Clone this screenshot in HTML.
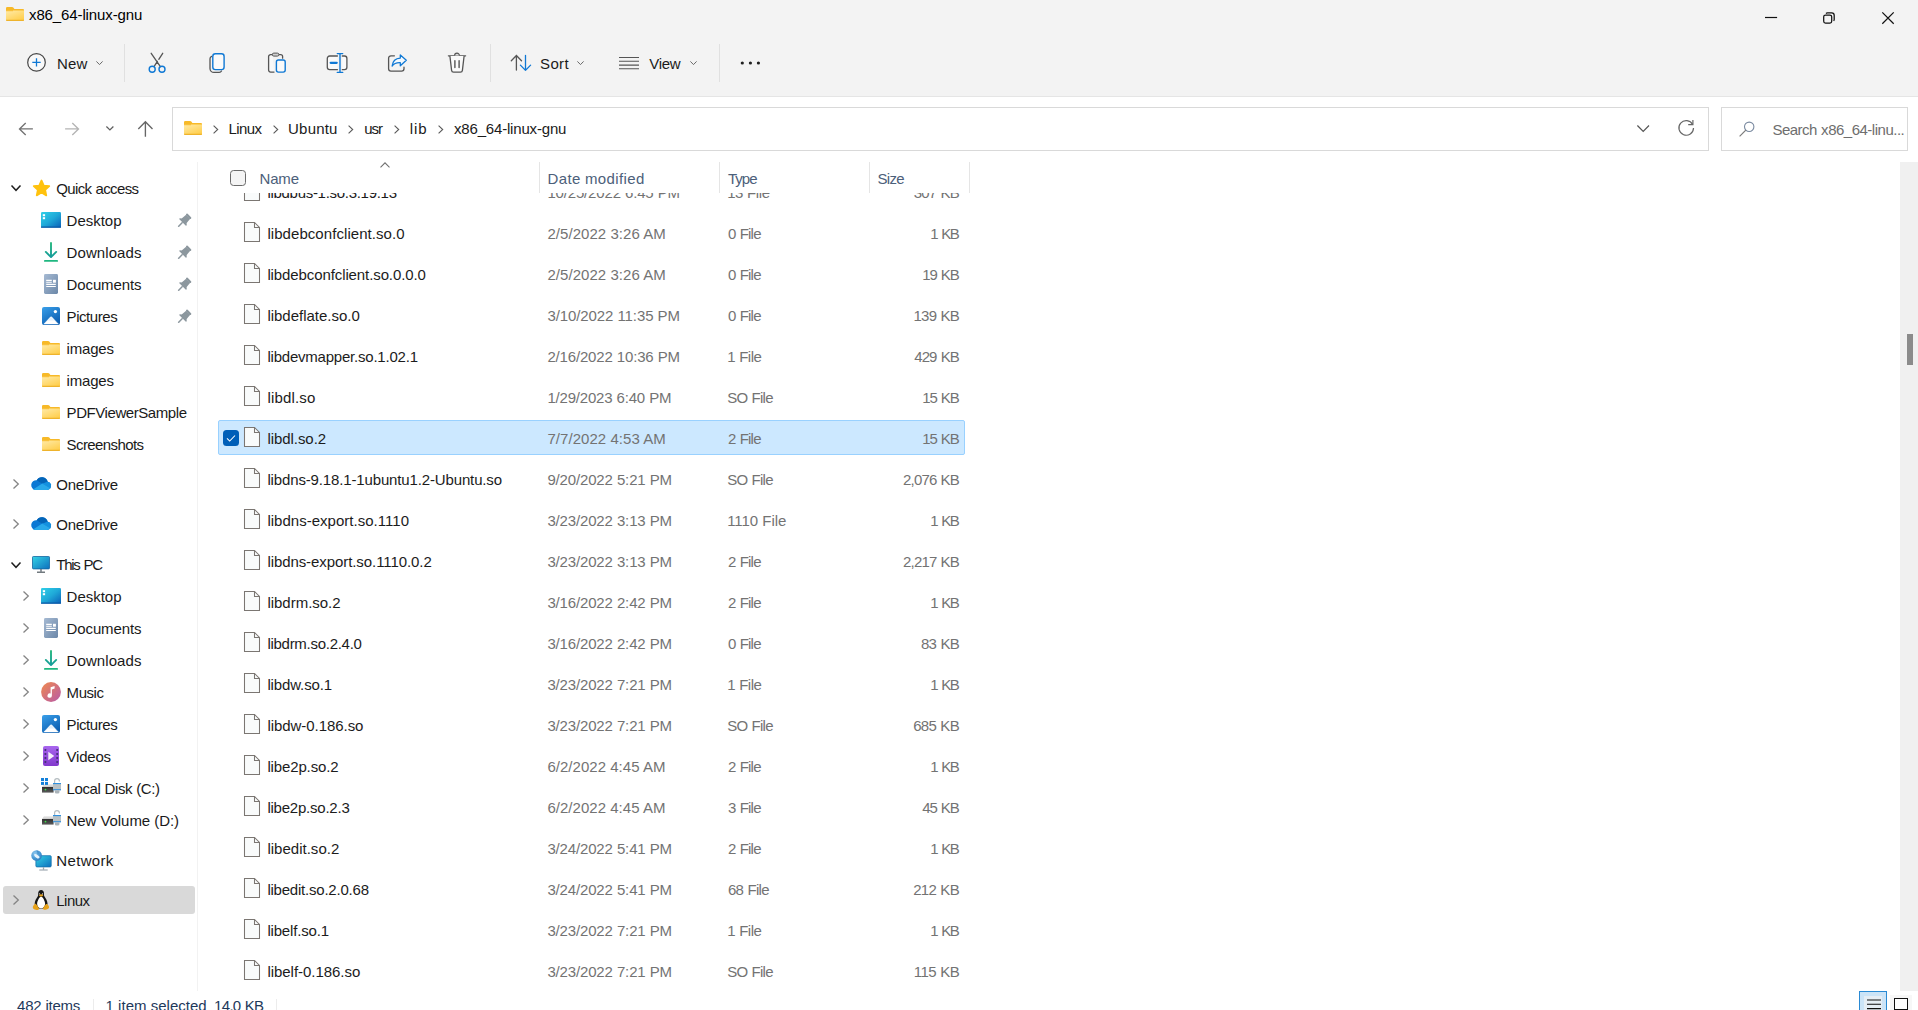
<!DOCTYPE html>
<html lang="en">
<head>
<meta charset="utf-8">
<title>x86_64-linux-gnu</title>
<style>
html,body{margin:0;padding:0}
html{width:1918px;height:1010px;overflow:hidden}
body{width:1918px;height:1010px;overflow:hidden;background:#fff;position:relative;font-family:"Liberation Sans",sans-serif}
.t{position:absolute;line-height:1;white-space:pre}
.a{position:absolute}
svg{position:absolute;overflow:visible}
#top{left:0;top:0;width:1918px;height:96px;background:#f3f3f3}
#topline{left:0;top:96px;width:1918px;height:1px;background:#e5e5e5}
.vsep{width:1px;background:#e0e0e0}
.box{box-sizing:border-box;border:1px solid #d9d9d9;background:#fff}
#win{position:absolute;left:0;top:0;width:1918px;height:1010px;overflow:hidden;background:#fff}

</style>
</head>
<body>
<div id="win">
<div class="a" id="top">
</div>
<div class="a" id="topline">
</div>
<span class="t" style="top:7.10px;font-size:15px;color:#000;left:29.00px;letter-spacing:-0.115px;">x86_64-linux-gnu</span>
<div class="a vsep" style="left:124px;top:44px;height:38px">
</div>
<div class="a vsep" style="left:490px;top:44px;height:38px">
</div>
<div class="a vsep" style="left:719px;top:44px;height:38px">
</div>
<span class="t" style="top:56.10px;font-size:15px;color:#1b1b1b;left:56.96px;letter-spacing:0.182px;">New</span>
<span class="t" style="top:56.10px;font-size:15px;color:#1b1b1b;left:540.08px;letter-spacing:0.345px;">Sort</span>
<span class="t" style="top:56.10px;font-size:15px;color:#1b1b1b;left:649.20px;letter-spacing:-0.260px;">View</span>
<div class="a box" style="left:172px;top:107px;width:1537px;height:44px">
</div>
<div class="a box" style="left:1721px;top:107px;width:187px;height:44px">
</div>
<span class="t" style="top:121.00px;font-size:15px;color:#1b1b1b;left:228.40px;letter-spacing:-0.590px;">Linux</span>
<span class="t" style="top:121.00px;font-size:15px;color:#1b1b1b;left:288.08px;letter-spacing:0.197px;">Ubuntu</span>
<span class="t" style="top:121.00px;font-size:15px;color:#1b1b1b;left:364.30px;letter-spacing:-1.122px;">usr</span>
<span class="t" style="top:121.00px;font-size:15px;color:#1b1b1b;left:409.64px;letter-spacing:0.927px;">lib</span>
<span class="t" style="top:121.00px;font-size:15px;color:#1b1b1b;left:454.00px;letter-spacing:-0.179px;">x86_64-linux-gnu</span>
<span class="t" style="top:121.80px;font-size:15px;color:#6e6e6e;left:1772.40px;letter-spacing:-0.494px;word-spacing:0.494px;">Search x86_64-linu...</span>
<svg width="0" height="0" style="left:0;top:0">
<defs>
<linearGradient id="gFold" x1="0.200" y1="0" x2="0.800" y2="1">
<stop offset="0" stop-color="#ffe8a0"/>
<stop offset="1" stop-color="#ffcd48"/>
</linearGradient>
<linearGradient id="gDesk" x1="0" y1="0" x2="1" y2="1">
<stop offset="0" stop-color="#30d0e8"/>
<stop offset="0.500" stop-color="#1fa9d8"/>
<stop offset="1" stop-color="#0b60b8"/>
</linearGradient>
<linearGradient id="gDoc" x1="0" y1="0" x2="1" y2="1">
<stop offset="0" stop-color="#a6bad3"/>
<stop offset="1" stop-color="#6b87a8"/>
</linearGradient>
<linearGradient id="gPic" x1="0" y1="0" x2="0.6" y2="1">
<stop offset="0" stop-color="#3aa0ea"/>
<stop offset="1" stop-color="#0c5fb2"/>
</linearGradient>
<linearGradient id="gDown" x1="0" y1="0" x2="0" y2="16" gradientUnits="userSpaceOnUse">
<stop offset="0" stop-color="#27b97c"/>
<stop offset="1" stop-color="#149a9c"/>
</linearGradient>
<linearGradient id="gMus" x1="0" y1="0" x2="1" y2="1">
<stop offset="0" stop-color="#f08a4e"/>
<stop offset="1" stop-color="#b75aa8"/>
</linearGradient>
<linearGradient id="gVid" x1="0" y1="0" x2="0" y2="1">
<stop offset="0" stop-color="#a866ee"/>
<stop offset="1" stop-color="#8238cc"/>
</linearGradient>
<linearGradient id="gMon" x1="0" y1="0" x2="1" y2="1">
<stop offset="0" stop-color="#35d3e6"/>
<stop offset="1" stop-color="#0d6fbd"/>
</linearGradient>
<linearGradient id="gDrv" x1="0" y1="0" x2="0" y2="1">
<stop offset="0" stop-color="#2e2e2e"/>
<stop offset="1" stop-color="#5c5c5c"/>
</linearGradient>
<linearGradient id="gDrvT" x1="0" y1="0" x2="0" y2="1">
<stop offset="0" stop-color="#f0f0f0"/>
<stop offset="1" stop-color="#c9c9c9"/>
</linearGradient>
<radialGradient id="gGlobe" cx="0.350" cy="0.300" r="0.800">
<stop offset="0" stop-color="#8fc8ee"/>
<stop offset="0.600" stop-color="#4596d4"/>
<stop offset="1" stop-color="#2a78ba"/>
</radialGradient>
</defs>
</svg>
<svg style="left:6px;top:7px" width="18" height="14" viewBox="0 0 18 14">
<path d="M0 1.2A1.2 1.2 0 0 1 1.2 0h4.9c.5 0 .9.2 1.2.6L8.4 2H17a1 1 0 0 1 1 1v2H0z" fill="#f7b928"/>
<path d="M0 3.400h18V13a1 1 0 0 1-1 1H1a1 1 0 0 1-1-1z" fill="url(#gFold)"/>
<rect x="0" y="3.300" width="7" height="0.900" fill="#f7b928"/>
<path d="M0 12.8h18V13a1 1 0 0 1-1 1H1a1 1 0 0 1-1-1z" fill="#eeb32c"/>
</svg>
<svg style="left:1765px;top:12px" width="130" height="13" viewBox="0 0 130 13">
<path d="M0 5.500h12.100" stroke="#111" stroke-width="1.200"/>
<rect x="58.700" y="3" width="8" height="8" rx="1.800" fill="none" stroke="#111" stroke-width="1.250"/>
<path d="M61 1.500a2 2 0 0 1 1.600-.600h4.100a2.500 2.500 0 0 1 2.500 2.500v4.100a2 2 0 0 1-.600 1.400" fill="none" stroke="#111" stroke-width="1.250"/>
<path d="M117.300 0.400l11.400 11.400M128.700 0.400L117.300 11.800" stroke="#111" stroke-width="1.250"/>
</svg>
<svg style="left:27px;top:53px" width="19" height="19" viewBox="0 0 19 19">
<circle cx="9.500" cy="9.400" r="8.800" fill="#f9f9f9" stroke="#454545" stroke-width="1.200"/>
<path d="M9.500 5.200v8.400M5.300 9.400h8.400" stroke="#0f78d4" stroke-width="1.300"/>
</svg>
<svg style="left:95.7px;top:61.3px" width="7" height="4.5" viewBox="0 0 7 4.5">
<path d="M0.400 0.400L3.500 3.600 6.600 .4" fill="none" stroke="#6a6a6a" stroke-width="1"/>
</svg>
<svg style="left:576.6px;top:61.3px" width="7" height="4.5" viewBox="0 0 7 4.5">
<path d="M0.400 0.400L3.500 3.600 6.600 .4" fill="none" stroke="#6a6a6a" stroke-width="1"/>
</svg>
<svg style="left:689.6px;top:61.3px" width="7" height="4.5" viewBox="0 0 7 4.5">
<path d="M0.400 0.400L3.500 3.600 6.600 .4" fill="none" stroke="#6a6a6a" stroke-width="1"/>
</svg>
<svg style="left:148px;top:52px" width="19" height="22" viewBox="0 0 19 22">
<path d="M3.200 1.300l9.200 13.400M14.700 1.300l-3.900 6M9.400 9.400l-3.400 5.200" stroke="#555" stroke-width="1.300" stroke-linecap="round" fill="none"/>
<circle cx="4.200" cy="17.300" r="3" fill="none" stroke="#0f78d4" stroke-width="1.400"/>
<circle cx="14" cy="17.300" r="3" fill="none" stroke="#0f78d4" stroke-width="1.400"/>
</svg>
<svg style="left:208px;top:52px" width="18" height="22" viewBox="0 0 18 22">
<path d="M3.600 4.300A2.600 2.600 0 0 0 2 6.700v9.700a4 4 0 0 0 4 4h5.200a2.600 2.600 0 0 0 2.300-1.400" fill="none" stroke="#555" stroke-width="1.300" stroke-linecap="round"/>
<rect x="4.800" y="1.800" width="11.300" height="15.800" rx="2.600" fill="#fafafa" stroke="#0f78d4" stroke-width="1.400"/>
</svg>
<svg style="left:267px;top:52px" width="20" height="22" viewBox="0 0 20 22">
<path d="M7 20.100H3.600a2 2 0 0 1-2-2V4.600a2 2 0 0 1 2-2h2M11.600 2.600h2a2 2 0 0 1 2 2v1.600" fill="#f9f9f9" stroke="#555" stroke-width="1.300" stroke-linecap="round"/>
<rect x="5.300" y="1.100" width="6.600" height="3" rx="1.500" fill="#cfcfcf" stroke="#555" stroke-width="1"/>
<rect x="9.400" y="8" width="8.800" height="12.100" rx="2" fill="#fafafa" stroke="#0f78d4" stroke-width="1.400"/>
</svg>
<svg style="left:326px;top:52px" width="22" height="22" viewBox="0 0 22 22">
<path d="M11.400 4h-7.700a2.400 2.400 0 0 0-2.400 2.400v8.900a2.400 2.400 0 0 0 2.400 2.400h7.700M16.300 4h2.200a2.400 2.400 0 0 1 2.400 2.400v8.900a2.400 2.400 0 0 1-2.400 2.400h-2.200" fill="#fafafa" stroke="#555" stroke-width="1.300" stroke-linecap="round"/>
<path d="M4.700 10.800h6" stroke="#0f78d4" stroke-width="2.300" stroke-linecap="round"/>
<path d="M14 1.700v18.600M11.300 1.600h5.400M11.300 20.400h5.400" stroke="#0f78d4" stroke-width="1.400" stroke-linecap="round"/>
</svg>
<svg style="left:387px;top:53px" width="21" height="20" viewBox="0 0 21 20">
<path d="M7.400 2.800H4a2.400 2.400 0 0 0-2.400 2.400v10.600A2.400 2.400 0 0 0 4 18.200h10.600a2.400 2.400 0 0 0 2.400-2.400v-1.600" fill="none" stroke="#555" stroke-width="1.300" stroke-linecap="round"/>
<path d="M13.300 2l6 5.300-6 5.500v-3.100c-4-.2-6.500 1-8.200 3.300.5-4.400 3.200-7.600 8.200-7.900z" fill="#f3f9fe" stroke="#0f78d4" stroke-width="1.300" stroke-linejoin="round"/>
</svg>
<svg style="left:447px;top:52px" width="20" height="22" viewBox="0 0 20 22">
<path d="M1.400 3.800h17.200" stroke="#555" stroke-width="1.300" stroke-linecap="round"/>
<path d="M7.600 3.600a2.400 2.400 0 0 1 4.800 0" fill="#ddd" stroke="#555" stroke-width="1.200"/>
<path d="M2.900 4l1.700 14.400a2 2 0 0 0 2 1.800h6.800a2 2 0 0 0 2-1.800L17.100 4" fill="#fafafa" stroke="#555" stroke-width="1.300"/>
<path d="M7.900 8.800v6.800M12.100 8.800v6.800" stroke="#555" stroke-width="1.400" stroke-linecap="round"/>
</svg>
<svg style="left:510px;top:54px" width="22" height="18" viewBox="0 0 22 18">
<path d="M6.400 16.100V1.500M1.300 6.800L6.400 1.500l5.100 5.300" fill="none" stroke="#555" stroke-width="1.300" stroke-linecap="round" stroke-linejoin="round"/>
<path d="M15.500 1.300v15M10.400 11.100l5.100 5.300 5.100-5.300" fill="none" stroke="#0f78d4" stroke-width="1.300" stroke-linecap="round" stroke-linejoin="round"/>
</svg>
<svg style="left:619px;top:56px" width="20" height="14" viewBox="0 0 20 14">
<path d="M0 1.500h20M0 5.300h20M0 9.100h20M0 12.800h20" stroke="#555" stroke-width="1.100"/>
</svg>
<svg style="left:740px;top:61px" width="22" height="4" viewBox="0 0 22 4">
<circle cx="2.300" cy="2" r="1.600" fill="#1f1f1f"/>
<circle cx="10.400" cy="2" r="1.600" fill="#1f1f1f"/>
<circle cx="18.400" cy="2" r="1.600" fill="#1f1f1f"/>
</svg>
<svg style="left:18px;top:121px" width="16" height="16" viewBox="0 0 16 16">
<path d="M14.900 7.900H1.600M7.700 1.900L1.500 7.900l6.200 6" fill="none" stroke="#727272" stroke-width="1.350"/>
</svg>
<svg style="left:65px;top:121px" width="16" height="16" viewBox="0 0 16 16">
<path d="M0.100 7.900h13.400M7.300 1.900l6.200 6-6.200 6" fill="none" stroke="#b4b4b4" stroke-width="1.350"/>
</svg>
<svg style="left:105.5px;top:126.1px" width="8" height="5.5" viewBox="0 0 8 5.5">
<path d="M0.400 0.500L3.900 3.900 7.400.5" fill="none" stroke="#5f5f5f" stroke-width="1.250"/>
</svg>
<svg style="left:138px;top:121px" width="16" height="16" viewBox="0 0 16 16">
<path d="M7.400 15.800V1M0.300 7.900L7.400.8l7.100 7.100" fill="none" stroke="#666" stroke-width="1.350"/>
</svg>
<svg style="left:184px;top:121px" width="18" height="14" viewBox="0 0 18 14">
<path d="M0 1.2A1.2 1.2 0 0 1 1.2 0h4.9c.5 0 .9.2 1.2.6L8.4 2H17a1 1 0 0 1 1 1v2H0z" fill="#f7b928"/>
<path d="M0 3.400h18V13a1 1 0 0 1-1 1H1a1 1 0 0 1-1-1z" fill="url(#gFold)"/>
<rect x="0" y="3.300" width="7" height="0.900" fill="#f7b928"/>
<path d="M0 12.8h18V13a1 1 0 0 1-1 1H1a1 1 0 0 1-1-1z" fill="#eeb32c"/>
</svg>
<svg style="left:212.5px;top:124.6px" width="6" height="9" viewBox="0 0 6 9">
<path d="M0.600 0.600L4.700 4.500.6 8.400" fill="none" stroke="#5a5a5a" stroke-width="1.100"/>
</svg>
<svg style="left:273.2px;top:124.6px" width="6" height="9" viewBox="0 0 6 9">
<path d="M0.600 0.600L4.700 4.500.6 8.400" fill="none" stroke="#5a5a5a" stroke-width="1.100"/>
</svg>
<svg style="left:348.3px;top:124.6px" width="6" height="9" viewBox="0 0 6 9">
<path d="M0.600 0.600L4.700 4.500.6 8.400" fill="none" stroke="#5a5a5a" stroke-width="1.100"/>
</svg>
<svg style="left:393.6px;top:124.6px" width="6" height="9" viewBox="0 0 6 9">
<path d="M0.600 0.600L4.700 4.500.6 8.400" fill="none" stroke="#5a5a5a" stroke-width="1.100"/>
</svg>
<svg style="left:438px;top:124.6px" width="6" height="9" viewBox="0 0 6 9">
<path d="M0.600 0.600L4.700 4.500.6 8.400" fill="none" stroke="#5a5a5a" stroke-width="1.100"/>
</svg>
<svg style="left:1637px;top:124.5px" width="13" height="8" viewBox="0 0 13 8">
<path d="M0.400 0.500l5.800 6 5.800-6" fill="none" stroke="#555" stroke-width="1.200"/>
</svg>
<svg style="left:1677px;top:119px" width="18" height="18" viewBox="0 0 18 18">
<path d="M15.600 5.400A7.300 7.300 0 1 0 16.500 9" fill="none" stroke="#666" stroke-width="1.200"/>
<path d="M15.900 1v4.700h-4.700" fill="none" stroke="#666" stroke-width="1.200"/>
</svg>
<svg style="left:1739px;top:120.5px" width="16" height="16" viewBox="0 0 16 16">
<circle cx="10.200" cy="5.800" r="4.700" fill="none" stroke="#7a8aa0" stroke-width="1.100"/>
<path d="M6.800 9.200L0.600 15.400" stroke="#7a7a7a" stroke-width="1.200"/>
</svg>
<div class="a" style="left:197px;top:162px;width:1px;height:829px;background:#f2f2f2">
</div>
<div class="a" style="left:3px;top:886px;width:192px;height:28px;background:#d9d9d9;border-radius:3px">
</div>
<span class="t" style="top:181.10px;font-size:15px;color:#1a1a1a;left:56.30px;letter-spacing:-0.650px;word-spacing:0.650px;">Quick access</span>
<span class="t" style="top:213.10px;font-size:15px;color:#1a1a1a;left:66.60px;letter-spacing:-0.019px;">Desktop</span>
<span class="t" style="top:245.10px;font-size:15px;color:#1a1a1a;left:66.60px;letter-spacing:0.081px;">Downloads</span>
<span class="t" style="top:277.10px;font-size:15px;color:#1a1a1a;left:66.60px;letter-spacing:-0.126px;">Documents</span>
<span class="t" style="top:309.10px;font-size:15px;color:#1a1a1a;left:66.60px;letter-spacing:-0.450px;">Pictures</span>
<span class="t" style="top:341.10px;font-size:15px;color:#1a1a1a;left:66.60px;letter-spacing:-0.192px;">images</span>
<span class="t" style="top:373.10px;font-size:15px;color:#1a1a1a;left:66.60px;letter-spacing:-0.192px;">images</span>
<span class="t" style="top:405.10px;font-size:15px;color:#1a1a1a;left:66.60px;letter-spacing:-0.432px;">PDFViewerSample</span>
<span class="t" style="top:437.10px;font-size:15px;color:#1a1a1a;left:66.60px;letter-spacing:-0.599px;">Screenshots</span>
<span class="t" style="top:477.10px;font-size:15px;color:#1a1a1a;left:56.30px;letter-spacing:-0.237px;">OneDrive</span>
<span class="t" style="top:517.10px;font-size:15px;color:#1a1a1a;left:56.30px;letter-spacing:-0.237px;">OneDrive</span>
<span class="t" style="top:557.10px;font-size:15px;color:#1a1a1a;left:56.30px;letter-spacing:-1.329px;word-spacing:1.329px;">This PC</span>
<span class="t" style="top:589.10px;font-size:15px;color:#1a1a1a;left:66.60px;letter-spacing:-0.019px;">Desktop</span>
<span class="t" style="top:621.10px;font-size:15px;color:#1a1a1a;left:66.60px;letter-spacing:-0.126px;">Documents</span>
<span class="t" style="top:653.10px;font-size:15px;color:#1a1a1a;left:66.60px;letter-spacing:0.081px;">Downloads</span>
<span class="t" style="top:685.10px;font-size:15px;color:#1a1a1a;left:66.60px;letter-spacing:-0.443px;">Music</span>
<span class="t" style="top:717.10px;font-size:15px;color:#1a1a1a;left:66.60px;letter-spacing:-0.450px;">Pictures</span>
<span class="t" style="top:749.10px;font-size:15px;color:#1a1a1a;left:66.60px;letter-spacing:-0.239px;">Videos</span>
<span class="t" style="top:781.10px;font-size:15px;color:#1a1a1a;left:66.60px;letter-spacing:-0.415px;word-spacing:0.415px;">Local Disk (C:)</span>
<span class="t" style="top:813.10px;font-size:15px;color:#1a1a1a;left:66.60px;letter-spacing:-0.083px;word-spacing:0.083px;">New Volume (D:)</span>
<span class="t" style="top:853.10px;font-size:15px;color:#1a1a1a;left:56.30px;letter-spacing:0.337px;">Network</span>
<span class="t" style="top:893.10px;font-size:15px;color:#1a1a1a;left:56.30px;letter-spacing:-0.540px;">Linux</span>
<svg style="left:10.8px;top:185.4px" width="10" height="5.8" viewBox="0 0 10 5.8">
<path d="M0.500 0.500L5 5.3L9.5 0.500" fill="none" stroke="#1f1f1f" stroke-width="1.5"/>
</svg>
<svg style="left:31.6px;top:179px" width="19" height="18" viewBox="0 0 19 18">
<path d="M9.500 1.400l2.300 5.100 5.500.600-4.100 3.800 1.100 5.500-4.800-2.800-4.800 2.800 1.100-5.500L1.700 7.100l5.500-.600z" fill="#ffc20e" stroke="#ffc20e" stroke-width="1.700" stroke-linejoin="round"/>
</svg>
<svg style="left:41px;top:212px" width="20" height="16" viewBox="0 0 20 16">
<rect x="0" y="0" width="20" height="15.6" rx="1.2" fill="url(#gDesk)"/>
<rect x="0" y="14.6" width="20" height="1.2" rx="0.5" fill="#0a58a6"/>
<rect x="1.800" y="2.200" width="2.300" height="2" fill="#fff"/>
<rect x="1.800" y="5.200" width="2.300" height="2" fill="#fff"/>
</svg>
<svg style="left:44px;top:242px" width="14" height="20" viewBox="0 0 14 20">
<path d="M7 0.900v14M1.800 9.900L7 15.100l5.200-5.200" fill="none" stroke="url(#gDown)" stroke-width="1.900" stroke-linecap="round" stroke-linejoin="round"/>
<path d="M0.900 18.900h12.200" stroke="#1fb780" stroke-width="1.900" stroke-linecap="round"/>
</svg>
<svg style="left:44px;top:274.2px" width="14" height="20" viewBox="0 0 14 20">
<rect x="0" y="0" width="14" height="20" rx="1.400" fill="url(#gDoc)"/>
<path d="M2.200 6.300h5.600M2.200 8.200h5.600M2.200 10.400h9.600M2.200 12.500h9.600" stroke="#fff" stroke-width="1.150"/>
<rect x="9" y="5.800" width="2.900" height="2.900" fill="#fff"/>
</svg>
<svg style="left:42px;top:307px" width="18" height="18" viewBox="0 0 18 18">
<rect x="0" y="0" width="18" height="18" rx="2" fill="url(#gPic)"/>
<path d="M2 16.900L8.500 10c.300-.400.900-.400 1.200 0L16.200 16.900z" fill="#fff" stroke="#fff" stroke-width="0.600" stroke-linejoin="round"/>
<path d="M5.800 13.500L8.500 10.500c.300-.300.900-.300 1.200 0l2.700 3z" fill="#e3f0fc"/>
<circle cx="13.400" cy="4.600" r="1.650" fill="#fff"/>
</svg>
<svg style="left:176px;top:212px" width="16" height="16" viewBox="0 0 16 16">
<g transform="translate(6.500 10.400) rotate(45)" fill="#8c979e">
<rect x="-3.300" y="-9.700" width="6.600" height="2" rx="0.900"/>
<path d="M-2.900-8h5.800l.500 5.800h-6.800z"/>
<path d="M-5.100 0c.200-1.500 1.300-2.500 2.700-2.700h4.800c1.400.200 2.500 1.200 2.700 2.700z"/>
<rect x="-0.750" y="-0.200" width="1.500" height="6.300" rx="0.400"/>
</g>
</svg>
<svg style="left:176px;top:244px" width="16" height="16" viewBox="0 0 16 16">
<g transform="translate(6.500 10.400) rotate(45)" fill="#8c979e">
<rect x="-3.300" y="-9.700" width="6.600" height="2" rx="0.900"/>
<path d="M-2.900-8h5.800l.500 5.800h-6.800z"/>
<path d="M-5.100 0c.200-1.500 1.300-2.500 2.700-2.700h4.800c1.400.200 2.500 1.200 2.700 2.700z"/>
<rect x="-0.750" y="-0.200" width="1.500" height="6.300" rx="0.400"/>
</g>
</svg>
<svg style="left:176px;top:276px" width="16" height="16" viewBox="0 0 16 16">
<g transform="translate(6.500 10.400) rotate(45)" fill="#8c979e">
<rect x="-3.300" y="-9.700" width="6.600" height="2" rx="0.900"/>
<path d="M-2.900-8h5.800l.500 5.800h-6.800z"/>
<path d="M-5.100 0c.200-1.500 1.300-2.500 2.700-2.700h4.800c1.400.200 2.500 1.200 2.700 2.700z"/>
<rect x="-0.750" y="-0.200" width="1.500" height="6.300" rx="0.400"/>
</g>
</svg>
<svg style="left:176px;top:308px" width="16" height="16" viewBox="0 0 16 16">
<g transform="translate(6.500 10.400) rotate(45)" fill="#8c979e">
<rect x="-3.300" y="-9.700" width="6.600" height="2" rx="0.900"/>
<path d="M-2.900-8h5.800l.500 5.800h-6.800z"/>
<path d="M-5.100 0c.200-1.500 1.300-2.500 2.700-2.700h4.800c1.400.200 2.500 1.200 2.700 2.700z"/>
<rect x="-0.750" y="-0.200" width="1.500" height="6.300" rx="0.400"/>
</g>
</svg>
<svg style="left:42px;top:341px" width="18" height="14" viewBox="0 0 18 14">
<path d="M0 1.2A1.2 1.2 0 0 1 1.2 0h4.9c.5 0 .9.2 1.2.6L8.4 2H17a1 1 0 0 1 1 1v2H0z" fill="#f7b928"/>
<path d="M0 3.400h18V13a1 1 0 0 1-1 1H1a1 1 0 0 1-1-1z" fill="url(#gFold)"/>
<rect x="0" y="3.300" width="7" height="0.900" fill="#f7b928"/>
<path d="M0 12.8h18V13a1 1 0 0 1-1 1H1a1 1 0 0 1-1-1z" fill="#eeb32c"/>
</svg>
<svg style="left:42px;top:373px" width="18" height="14" viewBox="0 0 18 14">
<path d="M0 1.2A1.2 1.2 0 0 1 1.2 0h4.9c.5 0 .9.2 1.2.6L8.4 2H17a1 1 0 0 1 1 1v2H0z" fill="#f7b928"/>
<path d="M0 3.400h18V13a1 1 0 0 1-1 1H1a1 1 0 0 1-1-1z" fill="url(#gFold)"/>
<rect x="0" y="3.300" width="7" height="0.900" fill="#f7b928"/>
<path d="M0 12.8h18V13a1 1 0 0 1-1 1H1a1 1 0 0 1-1-1z" fill="#eeb32c"/>
</svg>
<svg style="left:42px;top:405px" width="18" height="14" viewBox="0 0 18 14">
<path d="M0 1.2A1.2 1.2 0 0 1 1.2 0h4.9c.5 0 .9.2 1.2.6L8.4 2H17a1 1 0 0 1 1 1v2H0z" fill="#f7b928"/>
<path d="M0 3.400h18V13a1 1 0 0 1-1 1H1a1 1 0 0 1-1-1z" fill="url(#gFold)"/>
<rect x="0" y="3.300" width="7" height="0.900" fill="#f7b928"/>
<path d="M0 12.8h18V13a1 1 0 0 1-1 1H1a1 1 0 0 1-1-1z" fill="#eeb32c"/>
</svg>
<svg style="left:42px;top:437px" width="18" height="14" viewBox="0 0 18 14">
<path d="M0 1.2A1.2 1.2 0 0 1 1.2 0h4.9c.5 0 .9.2 1.2.6L8.4 2H17a1 1 0 0 1 1 1v2H0z" fill="#f7b928"/>
<path d="M0 3.400h18V13a1 1 0 0 1-1 1H1a1 1 0 0 1-1-1z" fill="url(#gFold)"/>
<rect x="0" y="3.300" width="7" height="0.900" fill="#f7b928"/>
<path d="M0 12.8h18V13a1 1 0 0 1-1 1H1a1 1 0 0 1-1-1z" fill="#eeb32c"/>
</svg>
<svg style="left:13.3px;top:479.2px" width="6" height="10" viewBox="0 0 6 10">
<path d="M0.500 0.500L5.300 5 .5 9.500" fill="none" stroke="#858585" stroke-width="1.3"/>
</svg>
<svg style="left:31px;top:477px" width="20" height="13" viewBox="0 0 20 13">
<path d="M4.600 13h11.200a4.200 4.200 0 0 0 .900-8.300A6 6 0 0 0 5.700 3.200 4.900 4.900 0 0 0 4.600 13z" fill="#0a78d4"/>
<path d="M5.700 3.200A6 6 0 0 1 16.700 4.700L11.200 6.700z" fill="#0364b8"/>
<path d="M16.700 4.700a4.200 4.200 0 0 1 2.600 6.600L11.200 6.700z" fill="#1490df"/>
<path d="M11.200 6.500l8.100 4.800a4.200 4.200 0 0 1-3.500 1.700H4.600a4.900 4.900 0 0 1-2.500-.600z" fill="#28a8ea"/>
</svg>
<svg style="left:13.3px;top:519.2px" width="6" height="10" viewBox="0 0 6 10">
<path d="M0.500 0.500L5.300 5 .5 9.500" fill="none" stroke="#858585" stroke-width="1.3"/>
</svg>
<svg style="left:31px;top:517px" width="20" height="13" viewBox="0 0 20 13">
<path d="M4.600 13h11.200a4.200 4.200 0 0 0 .900-8.300A6 6 0 0 0 5.700 3.200 4.900 4.900 0 0 0 4.600 13z" fill="#0a78d4"/>
<path d="M5.700 3.200A6 6 0 0 1 16.700 4.700L11.200 6.700z" fill="#0364b8"/>
<path d="M16.700 4.700a4.200 4.200 0 0 1 2.600 6.600L11.200 6.700z" fill="#1490df"/>
<path d="M11.200 6.500l8.100 4.800a4.200 4.200 0 0 1-3.500 1.700H4.600a4.900 4.900 0 0 1-2.500-.600z" fill="#28a8ea"/>
</svg>
<svg style="left:10.9px;top:561.6px" width="10" height="5.8" viewBox="0 0 10 5.8">
<path d="M0.500 0.500L5 5.3L9.5 0.500" fill="none" stroke="#1f1f1f" stroke-width="1.5"/>
</svg>
<svg style="left:32px;top:555.6px" width="18" height="17" viewBox="0 0 18 17">
<rect x="0.500" y="0.500" width="17" height="12.400" rx="0.800" fill="url(#gMon)" stroke="#15669f" stroke-width="0.800"/>
<path d="M9 13v2.800" stroke="#65707a" stroke-width="1.400"/>
<path d="M5 16.200h8" stroke="#4f5960" stroke-width="1.200"/>
</svg>
<svg style="left:23.3px;top:591.2px" width="6" height="10" viewBox="0 0 6 10">
<path d="M0.500 0.500L5.300 5 .5 9.500" fill="none" stroke="#858585" stroke-width="1.3"/>
</svg>
<svg style="left:23.3px;top:623.2px" width="6" height="10" viewBox="0 0 6 10">
<path d="M0.500 0.500L5.300 5 .5 9.500" fill="none" stroke="#858585" stroke-width="1.3"/>
</svg>
<svg style="left:23.3px;top:655.2px" width="6" height="10" viewBox="0 0 6 10">
<path d="M0.500 0.500L5.300 5 .5 9.500" fill="none" stroke="#858585" stroke-width="1.3"/>
</svg>
<svg style="left:23.3px;top:687.2px" width="6" height="10" viewBox="0 0 6 10">
<path d="M0.500 0.500L5.300 5 .5 9.500" fill="none" stroke="#858585" stroke-width="1.3"/>
</svg>
<svg style="left:23.3px;top:719.2px" width="6" height="10" viewBox="0 0 6 10">
<path d="M0.500 0.500L5.300 5 .5 9.500" fill="none" stroke="#858585" stroke-width="1.3"/>
</svg>
<svg style="left:23.3px;top:751.2px" width="6" height="10" viewBox="0 0 6 10">
<path d="M0.500 0.500L5.300 5 .5 9.500" fill="none" stroke="#858585" stroke-width="1.3"/>
</svg>
<svg style="left:23.3px;top:783.2px" width="6" height="10" viewBox="0 0 6 10">
<path d="M0.500 0.500L5.300 5 .5 9.500" fill="none" stroke="#858585" stroke-width="1.3"/>
</svg>
<svg style="left:23.3px;top:815.2px" width="6" height="10" viewBox="0 0 6 10">
<path d="M0.500 0.500L5.300 5 .5 9.500" fill="none" stroke="#858585" stroke-width="1.3"/>
</svg>
<svg style="left:41px;top:588px" width="20" height="16" viewBox="0 0 20 16">
<rect x="0" y="0" width="20" height="15.6" rx="1.2" fill="url(#gDesk)"/>
<rect x="0" y="14.6" width="20" height="1.2" rx="0.5" fill="#0a58a6"/>
<rect x="1.800" y="2.200" width="2.300" height="2" fill="#fff"/>
<rect x="1.800" y="5.200" width="2.300" height="2" fill="#fff"/>
</svg>
<svg style="left:44px;top:618.2px" width="14" height="20" viewBox="0 0 14 20">
<rect x="0" y="0" width="14" height="20" rx="1.400" fill="url(#gDoc)"/>
<path d="M2.200 6.300h5.600M2.200 8.200h5.600M2.200 10.400h9.600M2.200 12.500h9.600" stroke="#fff" stroke-width="1.150"/>
<rect x="9" y="5.800" width="2.900" height="2.900" fill="#fff"/>
</svg>
<svg style="left:44px;top:650px" width="14" height="20" viewBox="0 0 14 20">
<path d="M7 0.900v14M1.800 9.900L7 15.100l5.200-5.200" fill="none" stroke="url(#gDown)" stroke-width="1.900" stroke-linecap="round" stroke-linejoin="round"/>
<path d="M0.900 18.900h12.200" stroke="#1fb780" stroke-width="1.900" stroke-linecap="round"/>
</svg>
<svg style="left:41px;top:682.3px" width="20" height="20" viewBox="0 0 20 20">
<circle cx="10" cy="10" r="9.900" fill="url(#gMus)"/>
<path d="M9.600 5.200l4-1.200v2.600l-2.700.8v6.200a2.200 2.200 0 1 1-1.300-2z" fill="#fff"/>
</svg>
<svg style="left:42px;top:715px" width="18" height="18" viewBox="0 0 18 18">
<rect x="0" y="0" width="18" height="18" rx="2" fill="url(#gPic)"/>
<path d="M2 16.900L8.500 10c.300-.400.900-.400 1.200 0L16.200 16.900z" fill="#fff" stroke="#fff" stroke-width="0.600" stroke-linejoin="round"/>
<path d="M5.800 13.500L8.500 10.500c.300-.300.900-.300 1.200 0l2.700 3z" fill="#e3f0fc"/>
<circle cx="13.400" cy="4.600" r="1.650" fill="#fff"/>
</svg>
<svg style="left:42.8px;top:746px" width="16" height="20" viewBox="0 0 16 20">
<rect x="0" y="0" width="16" height="20" rx="2" fill="url(#gVid)"/>
<rect x="1.5" y="3.1" width="1.800" height="1.800" rx="0.300" fill="#47307a"/>
<rect x="1.5" y="7.1" width="1.800" height="1.800" rx="0.300" fill="#47307a"/>
<rect x="1.5" y="11.1" width="1.800" height="1.800" rx="0.300" fill="#47307a"/>
<rect x="1.5" y="15.1" width="1.800" height="1.800" rx="0.300" fill="#47307a"/>
<rect x="13.3" y="3.1" width="1.800" height="1.800" rx="0.300" fill="#47307a"/>
<rect x="13.3" y="7.1" width="1.800" height="1.800" rx="0.300" fill="#47307a"/>
<rect x="13.3" y="11.1" width="1.800" height="1.800" rx="0.300" fill="#47307a"/>
<rect x="13.3" y="15.1" width="1.800" height="1.800" rx="0.300" fill="#47307a"/>
<path d="M5.300 5.800v8.400l6-4.200z" fill="#f4f0fa"/>
</svg>
<svg style="left:41px;top:778px" width="21" height="17" viewBox="0 0 21 17">
<path d="M3 6h10l-0.700 3H1z" fill="url(#gDrvT)"/>
<rect x="1" y="9" width="11.600" height="5.600" fill="url(#gDrv)"/>
<circle cx="4.500" cy="11.600" r="0.900" fill="#3fe24a"/>
<path d="M13.600 5V3a2.400 2.400 0 0 1 4.800 0v0.600" fill="none" stroke="#b4bcc0" stroke-width="1.200"/>
<rect x="12" y="5" width="8" height="7.200" fill="#b9c1c5"/>
<rect x="12" y="5" width="8" height="1.100" fill="#2f90de"/>
<rect x="12" y="11.200" width="8" height="1.100" fill="#2f90de"/>
<path d="M13.800 12.300h4.700v1.600a1.600 1.600 0 0 1-1.600 1.600h-1.500a1.600 1.600 0 0 1-1.600-1.600z" fill="#aab3b9"/>
<rect x="0" y="0" width="3" height="3" fill="#1380da"/>
<rect x="0" y="3.9" width="3" height="3" fill="#1380da"/>
<rect x="4" y="0" width="3" height="3" fill="#1380da"/>
<rect x="4" y="3.9" width="3" height="3" fill="#1380da"/>
</svg>
<svg style="left:41px;top:810px" width="21" height="17" viewBox="0 0 21 17">
<path d="M3 6h10l-0.700 3H1z" fill="url(#gDrvT)"/>
<rect x="1" y="9" width="11.600" height="5.600" fill="url(#gDrv)"/>
<circle cx="4.500" cy="11.600" r="0.900" fill="#3fe24a"/>
<path d="M13.600 5V3a2.400 2.400 0 0 1 4.800 0v0.600" fill="none" stroke="#b4bcc0" stroke-width="1.200"/>
<rect x="12" y="5" width="8" height="7.200" fill="#b9c1c5"/>
<rect x="12" y="5" width="8" height="1.100" fill="#2f90de"/>
<rect x="12" y="11.200" width="8" height="1.100" fill="#2f90de"/>
<path d="M13.800 12.300h4.700v1.600a1.600 1.600 0 0 1-1.600 1.600h-1.500a1.600 1.600 0 0 1-1.600-1.600z" fill="#aab3b9"/>
</svg>
<svg style="left:30.5px;top:849.5px" width="21" height="21" viewBox="0 0 21 21">
<rect x="4.900" y="5.700" width="15.300" height="11.200" rx="1" fill="url(#gMon)" stroke="#1672ad" stroke-width="0.800"/>
<path d="M12.500 17.100v2.600" stroke="#9aa6ae" stroke-width="1.300"/>
<path d="M8.300 20h8.400" stroke="#8e9aa3" stroke-width="1"/>
<circle cx="5.600" cy="5.600" r="5.300" fill="url(#gGlobe)"/>
<path d="M3.300 4.200c.9-.5 2.200-.2 2.900.5.700.8 1.900 1.100 2.300 2 .300.800-.4 1.700-1.300 1.800-1 .1-1.700-.7-2.500-1.300C3.900 6.600 2.600 5 3.300 4.200z" fill="#e6f3fc"/>
<path d="M6.300 0.600c.700 1.200.900 2.500.600 3.700" stroke="#2a78b8" stroke-width="0.700" fill="none"/>
</svg>
<svg style="left:13.4px;top:895.2px" width="6" height="10" viewBox="0 0 6 10">
<path d="M0.500 0.500L5.300 5 .5 9.500" fill="none" stroke="#858585" stroke-width="1.3"/>
</svg>
<svg style="left:33px;top:890px" width="16" height="20" viewBox="0 0 16 20">
<path d="M8.100 0C6.300 0 5.200 1.300 5.200 3.200c0 1.500.1 2.400-.7 3.600C3.400 8.500 1.700 11 1.700 13.600c0 1.600.6 2.600 1.300 3.400L5 18.600h6.200l2-1.600c.7-.8 1.300-1.800 1.300-3.400 0-2.600-1.700-5.100-2.800-6.800-.8-1.200-.7-2.100-.7-3.600C11 1.300 9.900 0 8.100 0z" fill="#151515"/>
<path d="M8.100 6.800c-1.200 0-1.900 1-2.500 2.300-.7 1.500-1.500 3-1.500 4.700 0 2.400 1.600 4.500 4 4.500s4-2.100 4-4.500c0-1.700-.8-3.200-1.500-4.700C10 7.800 9.300 6.800 8.100 6.800z" fill="#fff"/>
<path d="M6 3.900c.3-.5.700-.7 1-.4.300.3.300.9.100 1.300zM10.200 3.900c-.3-.5-.7-.7-1-.4-.3.3-.3.900-.1 1.300z" fill="#fff"/>
<path d="M5.900 5.200c.6-.6 1.400-.9 2.200-.9s1.600.3 2.200.9c-.5.800-1.300 1.400-2.200 1.400s-1.700-.6-2.200-1.400z" fill="#e6a21a"/>
<path d="M-0.200 17.300c.1-1.100.9-2.100 1.600-3 .5-.6 1.300-.6 1.800 0 .7.800 1.300 1.800 2 2.700.6.800 1.100 1.700.5 2.400-.6.700-1.900.7-3 .4-1.300-.3-3-1.200-2.900-2.500z" fill="#e6a21a"/>
<path d="M16.100 17.100c-.1-1-.8-1.900-1.400-2.700-.5-.6-1.300-.7-1.900-.1-.8.700-1.400 1.700-2.100 2.600-.6.800-1 1.800-.4 2.400.7.700 1.900.6 3 .3 1.300-.3 2.900-1.200 2.800-2.500z" fill="#e6a21a"/>
</svg>
<span class="t" style="top:171.10px;font-size:15px;color:#4c607a;left:259.50px;letter-spacing:-0.172px;">Name</span>
<span class="t" style="top:171.10px;font-size:15px;color:#4c607a;left:547.50px;letter-spacing:0.396px;word-spacing:-0.396px;">Date modified</span>
<span class="t" style="top:171.10px;font-size:15px;color:#4c607a;left:727.90px;letter-spacing:-0.944px;">Type</span>
<span class="t" style="top:171.10px;font-size:15px;color:#4c607a;left:877.40px;letter-spacing:-0.659px;">Size</span>
<div class="a" id="list" style="left:199px;top:193px;width:1700px;height:798px;overflow:hidden">
<div class="a" style="left:-199px;top:-193px;width:1918px;height:1010px">
<div class="a" style="box-sizing:border-box;left:218px;top:420px;width:747px;height:35px;background:#cce8ff;border:1px solid #99d1ff;border-radius:2px">
</div>
<div class="a" style="left:223px;top:430px;width:16px;height:16px;border-radius:3.500px;background:#005fb8">
</div>
<svg style="left:223px;top:430px" width="16" height="16" viewBox="0 0 16 16">
<path d="M4 8.300l2.700 2.700L12 5.500" fill="none" stroke="#fff" stroke-width="1.050"/>
</svg>
<svg style="left:244px;top:181px" width="16" height="20" viewBox="0 0 16 20">
<path d="M0.500 0.500h10l5 5v14h-15z" fill="#f9fbfb" stroke="#7b7672" stroke-width="1.050"/>
<path d="M10.500 0.500v5h5" fill="none" stroke="#7b7672" stroke-width="1.050"/>
</svg>
<span class="t" style="top:185.05px;font-size:15px;color:#1c1c1c;left:267.40px;letter-spacing:-0.290px;">libdbus-1.so.3.19.13</span>
<span class="t" style="top:185.05px;font-size:15px;color:#737373;left:547.40px;letter-spacing:-0.165px;word-spacing:0.165px;">10/25/2022 6:45 PM</span>
<span class="t" style="top:185.05px;font-size:15px;color:#737373;left:727.13px;letter-spacing:-0.428px;word-spacing:0.428px;">13 File</span>
<span class="t" style="top:185.05px;font-size:15px;color:#737373;right:958.30px;letter-spacing:-0.795px;word-spacing:0.795px;margin-right:0.795px;">307 KB</span>
<svg style="left:244px;top:222px" width="16" height="20" viewBox="0 0 16 20">
<path d="M0.500 0.500h10l5 5v14h-15z" fill="#f9fbfb" stroke="#7b7672" stroke-width="1.050"/>
<path d="M10.500 0.500v5h5" fill="none" stroke="#7b7672" stroke-width="1.050"/>
</svg>
<span class="t" style="top:226.05px;font-size:15px;color:#1c1c1c;left:267.40px;letter-spacing:0.064px;">libdebconfclient.so.0</span>
<span class="t" style="top:226.05px;font-size:15px;color:#737373;left:547.40px;letter-spacing:0.062px;word-spacing:-0.062px;">2/5/2022 3:26 AM</span>
<span class="t" style="top:226.05px;font-size:15px;color:#737373;left:727.90px;letter-spacing:-0.772px;word-spacing:0.772px;">0 File</span>
<span class="t" style="top:226.05px;font-size:15px;color:#737373;right:958.30px;letter-spacing:-1.491px;word-spacing:1.491px;margin-right:1.491px;">1 KB</span>
<svg style="left:244px;top:263px" width="16" height="20" viewBox="0 0 16 20">
<path d="M0.500 0.500h10l5 5v14h-15z" fill="#f9fbfb" stroke="#7b7672" stroke-width="1.050"/>
<path d="M10.500 0.500v5h5" fill="none" stroke="#7b7672" stroke-width="1.050"/>
</svg>
<span class="t" style="top:267.05px;font-size:15px;color:#1c1c1c;left:267.40px;letter-spacing:-0.102px;">libdebconfclient.so.0.0.0</span>
<span class="t" style="top:267.05px;font-size:15px;color:#737373;left:547.40px;letter-spacing:0.062px;word-spacing:-0.062px;">2/5/2022 3:26 AM</span>
<span class="t" style="top:267.05px;font-size:15px;color:#737373;left:727.90px;letter-spacing:-0.772px;word-spacing:0.772px;">0 File</span>
<span class="t" style="top:267.05px;font-size:15px;color:#737373;right:958.30px;letter-spacing:-1.165px;word-spacing:1.165px;margin-right:1.165px;">19 KB</span>
<svg style="left:244px;top:304px" width="16" height="20" viewBox="0 0 16 20">
<path d="M0.500 0.500h10l5 5v14h-15z" fill="#f9fbfb" stroke="#7b7672" stroke-width="1.050"/>
<path d="M10.500 0.500v5h5" fill="none" stroke="#7b7672" stroke-width="1.050"/>
</svg>
<span class="t" style="top:308.05px;font-size:15px;color:#1c1c1c;left:267.40px;letter-spacing:-0.013px;">libdeflate.so.0</span>
<span class="t" style="top:308.05px;font-size:15px;color:#737373;left:547.40px;letter-spacing:-0.091px;word-spacing:0.091px;">3/10/2022 11:35 PM</span>
<span class="t" style="top:308.05px;font-size:15px;color:#737373;left:727.90px;letter-spacing:-0.772px;word-spacing:0.772px;">0 File</span>
<span class="t" style="top:308.05px;font-size:15px;color:#737373;right:958.30px;letter-spacing:-0.747px;word-spacing:0.747px;margin-right:0.747px;">139 KB</span>
<svg style="left:244px;top:345px" width="16" height="20" viewBox="0 0 16 20">
<path d="M0.500 0.500h10l5 5v14h-15z" fill="#f9fbfb" stroke="#7b7672" stroke-width="1.050"/>
<path d="M10.500 0.500v5h5" fill="none" stroke="#7b7672" stroke-width="1.050"/>
</svg>
<span class="t" style="top:349.05px;font-size:15px;color:#1c1c1c;left:267.40px;letter-spacing:-0.215px;">libdevmapper.so.1.02.1</span>
<span class="t" style="top:349.05px;font-size:15px;color:#737373;left:547.40px;letter-spacing:-0.165px;word-spacing:0.165px;">2/16/2022 10:36 PM</span>
<span class="t" style="top:349.05px;font-size:15px;color:#737373;left:727.13px;letter-spacing:-0.492px;word-spacing:0.492px;">1 File</span>
<span class="t" style="top:349.05px;font-size:15px;color:#737373;right:958.30px;letter-spacing:-0.955px;word-spacing:0.955px;margin-right:0.955px;">429 KB</span>
<svg style="left:244px;top:386px" width="16" height="20" viewBox="0 0 16 20">
<path d="M0.500 0.500h10l5 5v14h-15z" fill="#f9fbfb" stroke="#7b7672" stroke-width="1.050"/>
<path d="M10.500 0.500v5h5" fill="none" stroke="#7b7672" stroke-width="1.050"/>
</svg>
<span class="t" style="top:390.05px;font-size:15px;color:#1c1c1c;left:267.40px;letter-spacing:0.167px;">libdl.so</span>
<span class="t" style="top:390.05px;font-size:15px;color:#737373;left:547.40px;letter-spacing:-0.193px;word-spacing:0.193px;">1/29/2023 6:40 PM</span>
<span class="t" style="top:390.05px;font-size:15px;color:#737373;left:727.13px;letter-spacing:-0.723px;word-spacing:0.723px;">SO File</span>
<span class="t" style="top:390.05px;font-size:15px;color:#737373;right:958.30px;letter-spacing:-1.165px;word-spacing:1.165px;margin-right:1.165px;">15 KB</span>
<svg style="left:244px;top:427px" width="16" height="20" viewBox="0 0 16 20">
<path d="M0.500 0.500h10l5 5v14h-15z" fill="#f9fbfb" stroke="#7b7672" stroke-width="1.050"/>
<path d="M10.500 0.500v5h5" fill="none" stroke="#7b7672" stroke-width="1.050"/>
</svg>
<span class="t" style="top:431.05px;font-size:15px;color:#1c1c1c;left:267.40px;letter-spacing:-0.056px;">libdl.so.2</span>
<span class="t" style="top:431.05px;font-size:15px;color:#737373;left:547.40px;letter-spacing:0.062px;word-spacing:-0.062px;">7/7/2022 4:53 AM</span>
<span class="t" style="top:431.05px;font-size:15px;color:#737373;left:727.90px;letter-spacing:-0.772px;word-spacing:0.772px;">2 File</span>
<span class="t" style="top:431.05px;font-size:15px;color:#737373;right:958.30px;letter-spacing:-1.165px;word-spacing:1.165px;margin-right:1.165px;">15 KB</span>
<svg style="left:244px;top:468px" width="16" height="20" viewBox="0 0 16 20">
<path d="M0.500 0.500h10l5 5v14h-15z" fill="#f9fbfb" stroke="#7b7672" stroke-width="1.050"/>
<path d="M10.500 0.500v5h5" fill="none" stroke="#7b7672" stroke-width="1.050"/>
</svg>
<span class="t" style="top:472.05px;font-size:15px;color:#1c1c1c;left:267.40px;letter-spacing:-0.141px;">libdns-9.18.1-1ubuntu1.2-Ubuntu.so</span>
<span class="t" style="top:472.05px;font-size:15px;color:#737373;left:547.40px;letter-spacing:-0.152px;word-spacing:0.152px;">9/20/2022 5:21 PM</span>
<span class="t" style="top:472.05px;font-size:15px;color:#737373;left:727.13px;letter-spacing:-0.723px;word-spacing:0.723px;">SO File</span>
<span class="t" style="top:472.05px;font-size:15px;color:#737373;right:958.30px;letter-spacing:-0.853px;word-spacing:0.853px;margin-right:0.853px;">2,076 KB</span>
<svg style="left:244px;top:509px" width="16" height="20" viewBox="0 0 16 20">
<path d="M0.500 0.500h10l5 5v14h-15z" fill="#f9fbfb" stroke="#7b7672" stroke-width="1.050"/>
<path d="M10.500 0.500v5h5" fill="none" stroke="#7b7672" stroke-width="1.050"/>
</svg>
<span class="t" style="top:513.05px;font-size:15px;color:#1c1c1c;left:267.40px;letter-spacing:0.020px;">libdns-export.so.1110</span>
<span class="t" style="top:513.05px;font-size:15px;color:#737373;left:547.40px;letter-spacing:-0.152px;word-spacing:0.152px;">3/23/2022 3:13 PM</span>
<span class="t" style="top:513.05px;font-size:15px;color:#737373;left:727.13px;letter-spacing:-0.036px;word-spacing:0.036px;">1110 File</span>
<span class="t" style="top:513.05px;font-size:15px;color:#737373;right:958.30px;letter-spacing:-1.491px;word-spacing:1.491px;margin-right:1.491px;">1 KB</span>
<svg style="left:244px;top:550px" width="16" height="20" viewBox="0 0 16 20">
<path d="M0.500 0.500h10l5 5v14h-15z" fill="#f9fbfb" stroke="#7b7672" stroke-width="1.050"/>
<path d="M10.500 0.500v5h5" fill="none" stroke="#7b7672" stroke-width="1.050"/>
</svg>
<span class="t" style="top:554.05px;font-size:15px;color:#1c1c1c;left:267.40px;letter-spacing:-0.077px;">libdns-export.so.1110.0.2</span>
<span class="t" style="top:554.05px;font-size:15px;color:#737373;left:547.40px;letter-spacing:-0.152px;word-spacing:0.152px;">3/23/2022 3:13 PM</span>
<span class="t" style="top:554.05px;font-size:15px;color:#737373;left:727.90px;letter-spacing:-0.772px;word-spacing:0.772px;">2 File</span>
<span class="t" style="top:554.05px;font-size:15px;color:#737373;right:958.30px;letter-spacing:-0.853px;word-spacing:0.853px;margin-right:0.853px;">2,217 KB</span>
<svg style="left:244px;top:591px" width="16" height="20" viewBox="0 0 16 20">
<path d="M0.500 0.500h10l5 5v14h-15z" fill="#f9fbfb" stroke="#7b7672" stroke-width="1.050"/>
<path d="M10.500 0.500v5h5" fill="none" stroke="#7b7672" stroke-width="1.050"/>
</svg>
<span class="t" style="top:595.05px;font-size:15px;color:#1c1c1c;left:267.40px;letter-spacing:-0.015px;">libdrm.so.2</span>
<span class="t" style="top:595.05px;font-size:15px;color:#737373;left:547.40px;letter-spacing:-0.152px;word-spacing:0.152px;">3/16/2022 2:42 PM</span>
<span class="t" style="top:595.05px;font-size:15px;color:#737373;left:727.90px;letter-spacing:-0.772px;word-spacing:0.772px;">2 File</span>
<span class="t" style="top:595.05px;font-size:15px;color:#737373;right:958.30px;letter-spacing:-1.491px;word-spacing:1.491px;margin-right:1.491px;">1 KB</span>
<svg style="left:244px;top:632px" width="16" height="20" viewBox="0 0 16 20">
<path d="M0.500 0.500h10l5 5v14h-15z" fill="#f9fbfb" stroke="#7b7672" stroke-width="1.050"/>
<path d="M10.500 0.500v5h5" fill="none" stroke="#7b7672" stroke-width="1.050"/>
</svg>
<span class="t" style="top:636.05px;font-size:15px;color:#1c1c1c;left:267.40px;letter-spacing:-0.278px;">libdrm.so.2.4.0</span>
<span class="t" style="top:636.05px;font-size:15px;color:#737373;left:547.40px;letter-spacing:-0.152px;word-spacing:0.152px;">3/16/2022 2:42 PM</span>
<span class="t" style="top:636.05px;font-size:15px;color:#737373;left:727.90px;letter-spacing:-0.772px;word-spacing:0.772px;">0 File</span>
<span class="t" style="top:636.05px;font-size:15px;color:#737373;right:958.30px;letter-spacing:-0.718px;word-spacing:0.718px;margin-right:0.718px;">83 KB</span>
<svg style="left:244px;top:673px" width="16" height="20" viewBox="0 0 16 20">
<path d="M0.500 0.500h10l5 5v14h-15z" fill="#f9fbfb" stroke="#7b7672" stroke-width="1.050"/>
<path d="M10.500 0.500v5h5" fill="none" stroke="#7b7672" stroke-width="1.050"/>
</svg>
<span class="t" style="top:677.05px;font-size:15px;color:#1c1c1c;left:267.40px;letter-spacing:-0.131px;">libdw.so.1</span>
<span class="t" style="top:677.05px;font-size:15px;color:#737373;left:547.40px;letter-spacing:-0.152px;word-spacing:0.152px;">3/23/2022 7:21 PM</span>
<span class="t" style="top:677.05px;font-size:15px;color:#737373;left:727.13px;letter-spacing:-0.492px;word-spacing:0.492px;">1 File</span>
<span class="t" style="top:677.05px;font-size:15px;color:#737373;right:958.30px;letter-spacing:-1.491px;word-spacing:1.491px;margin-right:1.491px;">1 KB</span>
<svg style="left:244px;top:714px" width="16" height="20" viewBox="0 0 16 20">
<path d="M0.500 0.500h10l5 5v14h-15z" fill="#f9fbfb" stroke="#7b7672" stroke-width="1.050"/>
<path d="M10.500 0.500v5h5" fill="none" stroke="#7b7672" stroke-width="1.050"/>
</svg>
<span class="t" style="top:718.05px;font-size:15px;color:#1c1c1c;left:267.40px;letter-spacing:-0.053px;">libdw-0.186.so</span>
<span class="t" style="top:718.05px;font-size:15px;color:#737373;left:547.40px;letter-spacing:-0.152px;word-spacing:0.152px;">3/23/2022 7:21 PM</span>
<span class="t" style="top:718.05px;font-size:15px;color:#737373;left:727.13px;letter-spacing:-0.723px;word-spacing:0.723px;">SO File</span>
<span class="t" style="top:718.05px;font-size:15px;color:#737373;right:958.30px;letter-spacing:-0.667px;word-spacing:0.667px;margin-right:0.667px;">685 KB</span>
<svg style="left:244px;top:755px" width="16" height="20" viewBox="0 0 16 20">
<path d="M0.500 0.500h10l5 5v14h-15z" fill="#f9fbfb" stroke="#7b7672" stroke-width="1.050"/>
<path d="M10.500 0.500v5h5" fill="none" stroke="#7b7672" stroke-width="1.050"/>
</svg>
<span class="t" style="top:759.05px;font-size:15px;color:#1c1c1c;left:267.40px;letter-spacing:-0.135px;">libe2p.so.2</span>
<span class="t" style="top:759.05px;font-size:15px;color:#737373;left:547.40px;letter-spacing:0.034px;word-spacing:-0.034px;">6/2/2022 4:45 AM</span>
<span class="t" style="top:759.05px;font-size:15px;color:#737373;left:727.90px;letter-spacing:-0.772px;word-spacing:0.772px;">2 File</span>
<span class="t" style="top:759.05px;font-size:15px;color:#737373;right:958.30px;letter-spacing:-1.491px;word-spacing:1.491px;margin-right:1.491px;">1 KB</span>
<svg style="left:244px;top:796px" width="16" height="20" viewBox="0 0 16 20">
<path d="M0.500 0.500h10l5 5v14h-15z" fill="#f9fbfb" stroke="#7b7672" stroke-width="1.050"/>
<path d="M10.500 0.500v5h5" fill="none" stroke="#7b7672" stroke-width="1.050"/>
</svg>
<span class="t" style="top:800.05px;font-size:15px;color:#1c1c1c;left:267.40px;letter-spacing:-0.225px;">libe2p.so.2.3</span>
<span class="t" style="top:800.05px;font-size:15px;color:#737373;left:547.40px;letter-spacing:0.034px;word-spacing:-0.034px;">6/2/2022 4:45 AM</span>
<span class="t" style="top:800.05px;font-size:15px;color:#737373;left:727.90px;letter-spacing:-0.772px;word-spacing:0.772px;">3 File</span>
<span class="t" style="top:800.05px;font-size:15px;color:#737373;right:958.30px;letter-spacing:-1.092px;word-spacing:1.092px;margin-right:1.092px;">45 KB</span>
<svg style="left:244px;top:837px" width="16" height="20" viewBox="0 0 16 20">
<path d="M0.500 0.500h10l5 5v14h-15z" fill="#f9fbfb" stroke="#7b7672" stroke-width="1.050"/>
<path d="M10.500 0.500v5h5" fill="none" stroke="#7b7672" stroke-width="1.050"/>
</svg>
<span class="t" style="top:841.05px;font-size:15px;color:#1c1c1c;left:267.40px;letter-spacing:0.014px;">libedit.so.2</span>
<span class="t" style="top:841.05px;font-size:15px;color:#737373;left:547.40px;letter-spacing:-0.152px;word-spacing:0.152px;">3/24/2022 5:41 PM</span>
<span class="t" style="top:841.05px;font-size:15px;color:#737373;left:727.90px;letter-spacing:-0.772px;word-spacing:0.772px;">2 File</span>
<span class="t" style="top:841.05px;font-size:15px;color:#737373;right:958.30px;letter-spacing:-1.491px;word-spacing:1.491px;margin-right:1.491px;">1 KB</span>
<svg style="left:244px;top:878px" width="16" height="20" viewBox="0 0 16 20">
<path d="M0.500 0.500h10l5 5v14h-15z" fill="#f9fbfb" stroke="#7b7672" stroke-width="1.050"/>
<path d="M10.500 0.500v5h5" fill="none" stroke="#7b7672" stroke-width="1.050"/>
</svg>
<span class="t" style="top:882.05px;font-size:15px;color:#1c1c1c;left:267.40px;letter-spacing:-0.217px;">libedit.so.2.0.68</span>
<span class="t" style="top:882.05px;font-size:15px;color:#737373;left:547.40px;letter-spacing:-0.152px;word-spacing:0.152px;">3/24/2022 5:41 PM</span>
<span class="t" style="top:882.05px;font-size:15px;color:#737373;left:727.90px;letter-spacing:-0.666px;word-spacing:0.666px;">68 File</span>
<span class="t" style="top:882.05px;font-size:15px;color:#737373;right:958.30px;letter-spacing:-0.667px;word-spacing:0.667px;margin-right:0.667px;">212 KB</span>
<svg style="left:244px;top:919px" width="16" height="20" viewBox="0 0 16 20">
<path d="M0.500 0.500h10l5 5v14h-15z" fill="#f9fbfb" stroke="#7b7672" stroke-width="1.050"/>
<path d="M10.500 0.500v5h5" fill="none" stroke="#7b7672" stroke-width="1.050"/>
</svg>
<span class="t" style="top:923.05px;font-size:15px;color:#1c1c1c;left:267.40px;letter-spacing:-0.177px;">libelf.so.1</span>
<span class="t" style="top:923.05px;font-size:15px;color:#737373;left:547.40px;letter-spacing:-0.152px;word-spacing:0.152px;">3/23/2022 7:21 PM</span>
<span class="t" style="top:923.05px;font-size:15px;color:#737373;left:727.13px;letter-spacing:-0.492px;word-spacing:0.492px;">1 File</span>
<span class="t" style="top:923.05px;font-size:15px;color:#737373;right:958.30px;letter-spacing:-1.491px;word-spacing:1.491px;margin-right:1.491px;">1 KB</span>
<svg style="left:244px;top:960px" width="16" height="20" viewBox="0 0 16 20">
<path d="M0.500 0.500h10l5 5v14h-15z" fill="#f9fbfb" stroke="#7b7672" stroke-width="1.050"/>
<path d="M10.500 0.500v5h5" fill="none" stroke="#7b7672" stroke-width="1.050"/>
</svg>
<span class="t" style="top:964.05px;font-size:15px;color:#1c1c1c;left:267.40px;letter-spacing:-0.038px;">libelf-0.186.so</span>
<span class="t" style="top:964.05px;font-size:15px;color:#737373;left:547.40px;letter-spacing:-0.152px;word-spacing:0.152px;">3/23/2022 7:21 PM</span>
<span class="t" style="top:964.05px;font-size:15px;color:#737373;left:727.13px;letter-spacing:-0.723px;word-spacing:0.723px;">SO File</span>
<span class="t" style="top:964.05px;font-size:15px;color:#737373;right:958.30px;letter-spacing:-0.551px;word-spacing:0.551px;margin-right:0.551px;">115 KB</span>
</div>
</div>
<div class="a" style="left:539px;top:162px;width:1px;height:31px;background:#e5e5e5">
</div>
<div class="a" style="left:719px;top:162px;width:1px;height:31px;background:#e5e5e5">
</div>
<div class="a" style="left:869px;top:162px;width:1px;height:31px;background:#e5e5e5">
</div>
<div class="a" style="left:969px;top:162px;width:1px;height:31px;background:#e5e5e5">
</div>
<div class="a" style="left:1900px;top:162px;width:18px;height:829px;background:#f0f0f0">
</div>
<div class="a" style="left:1907px;top:334px;width:6px;height:31px;background:#8b8b8b">
</div>
<div class="a" style="box-sizing:border-box;left:230px;top:170px;width:16px;height:16px;border:1.200px solid #6a6a6a;border-radius:3.500px;background:#f4f4f4">
</div>
<svg style="left:379.7px;top:162.2px" width="10" height="6" viewBox="0 0 10 6">
<path d="M0.500 5.300L5 .8l4.500 4.500" fill="none" stroke="#707070" stroke-width="1.100"/>
</svg>
<div class="a" style="box-sizing:border-box;left:1859px;top:991px;width:28px;height:22px;border:1px solid #2a8ad4;background:#cce4f7">
</div>
<div class="a" style="left:1864px;top:996px;width:18px;height:14px;background:#e6eef5">
</div>
<svg style="left:1867px;top:999px" width="14" height="11" viewBox="0 0 14 11">
<path d="M0 1h14M0 5.300h14M0 9.600h14" stroke="#111" stroke-width="1.100"/>
</svg>
<div class="a" style="left:1890px;top:995px;width:22px;height:15px;background:#f7f7f7">
</div>
<div class="a" style="box-sizing:border-box;left:1894px;top:998px;width:14px;height:12px;border:1.400px solid #111;background:#fff">
</div>
<span class="t" style="top:997.90px;font-size:15px;color:#1e395b;left:17.10px;letter-spacing:-0.264px;word-spacing:0.264px;">482 items</span>
<span class="t" style="top:997.90px;font-size:15px;color:#1e395b;left:105.60px;letter-spacing:0.017px;word-spacing:-0.017px;">1 item selected</span>
<span class="t" style="top:997.90px;font-size:15px;color:#1e395b;left:214.12px;letter-spacing:-0.707px;word-spacing:0.707px;">14.0 KB</span>
<div class="a" style="left:93px;top:999px;width:1px;height:11px;background:#ececec">
</div>
<div class="a" style="left:276px;top:999px;width:1px;height:11px;background:#ececec">
</div>
</div>
</body>
</html>
